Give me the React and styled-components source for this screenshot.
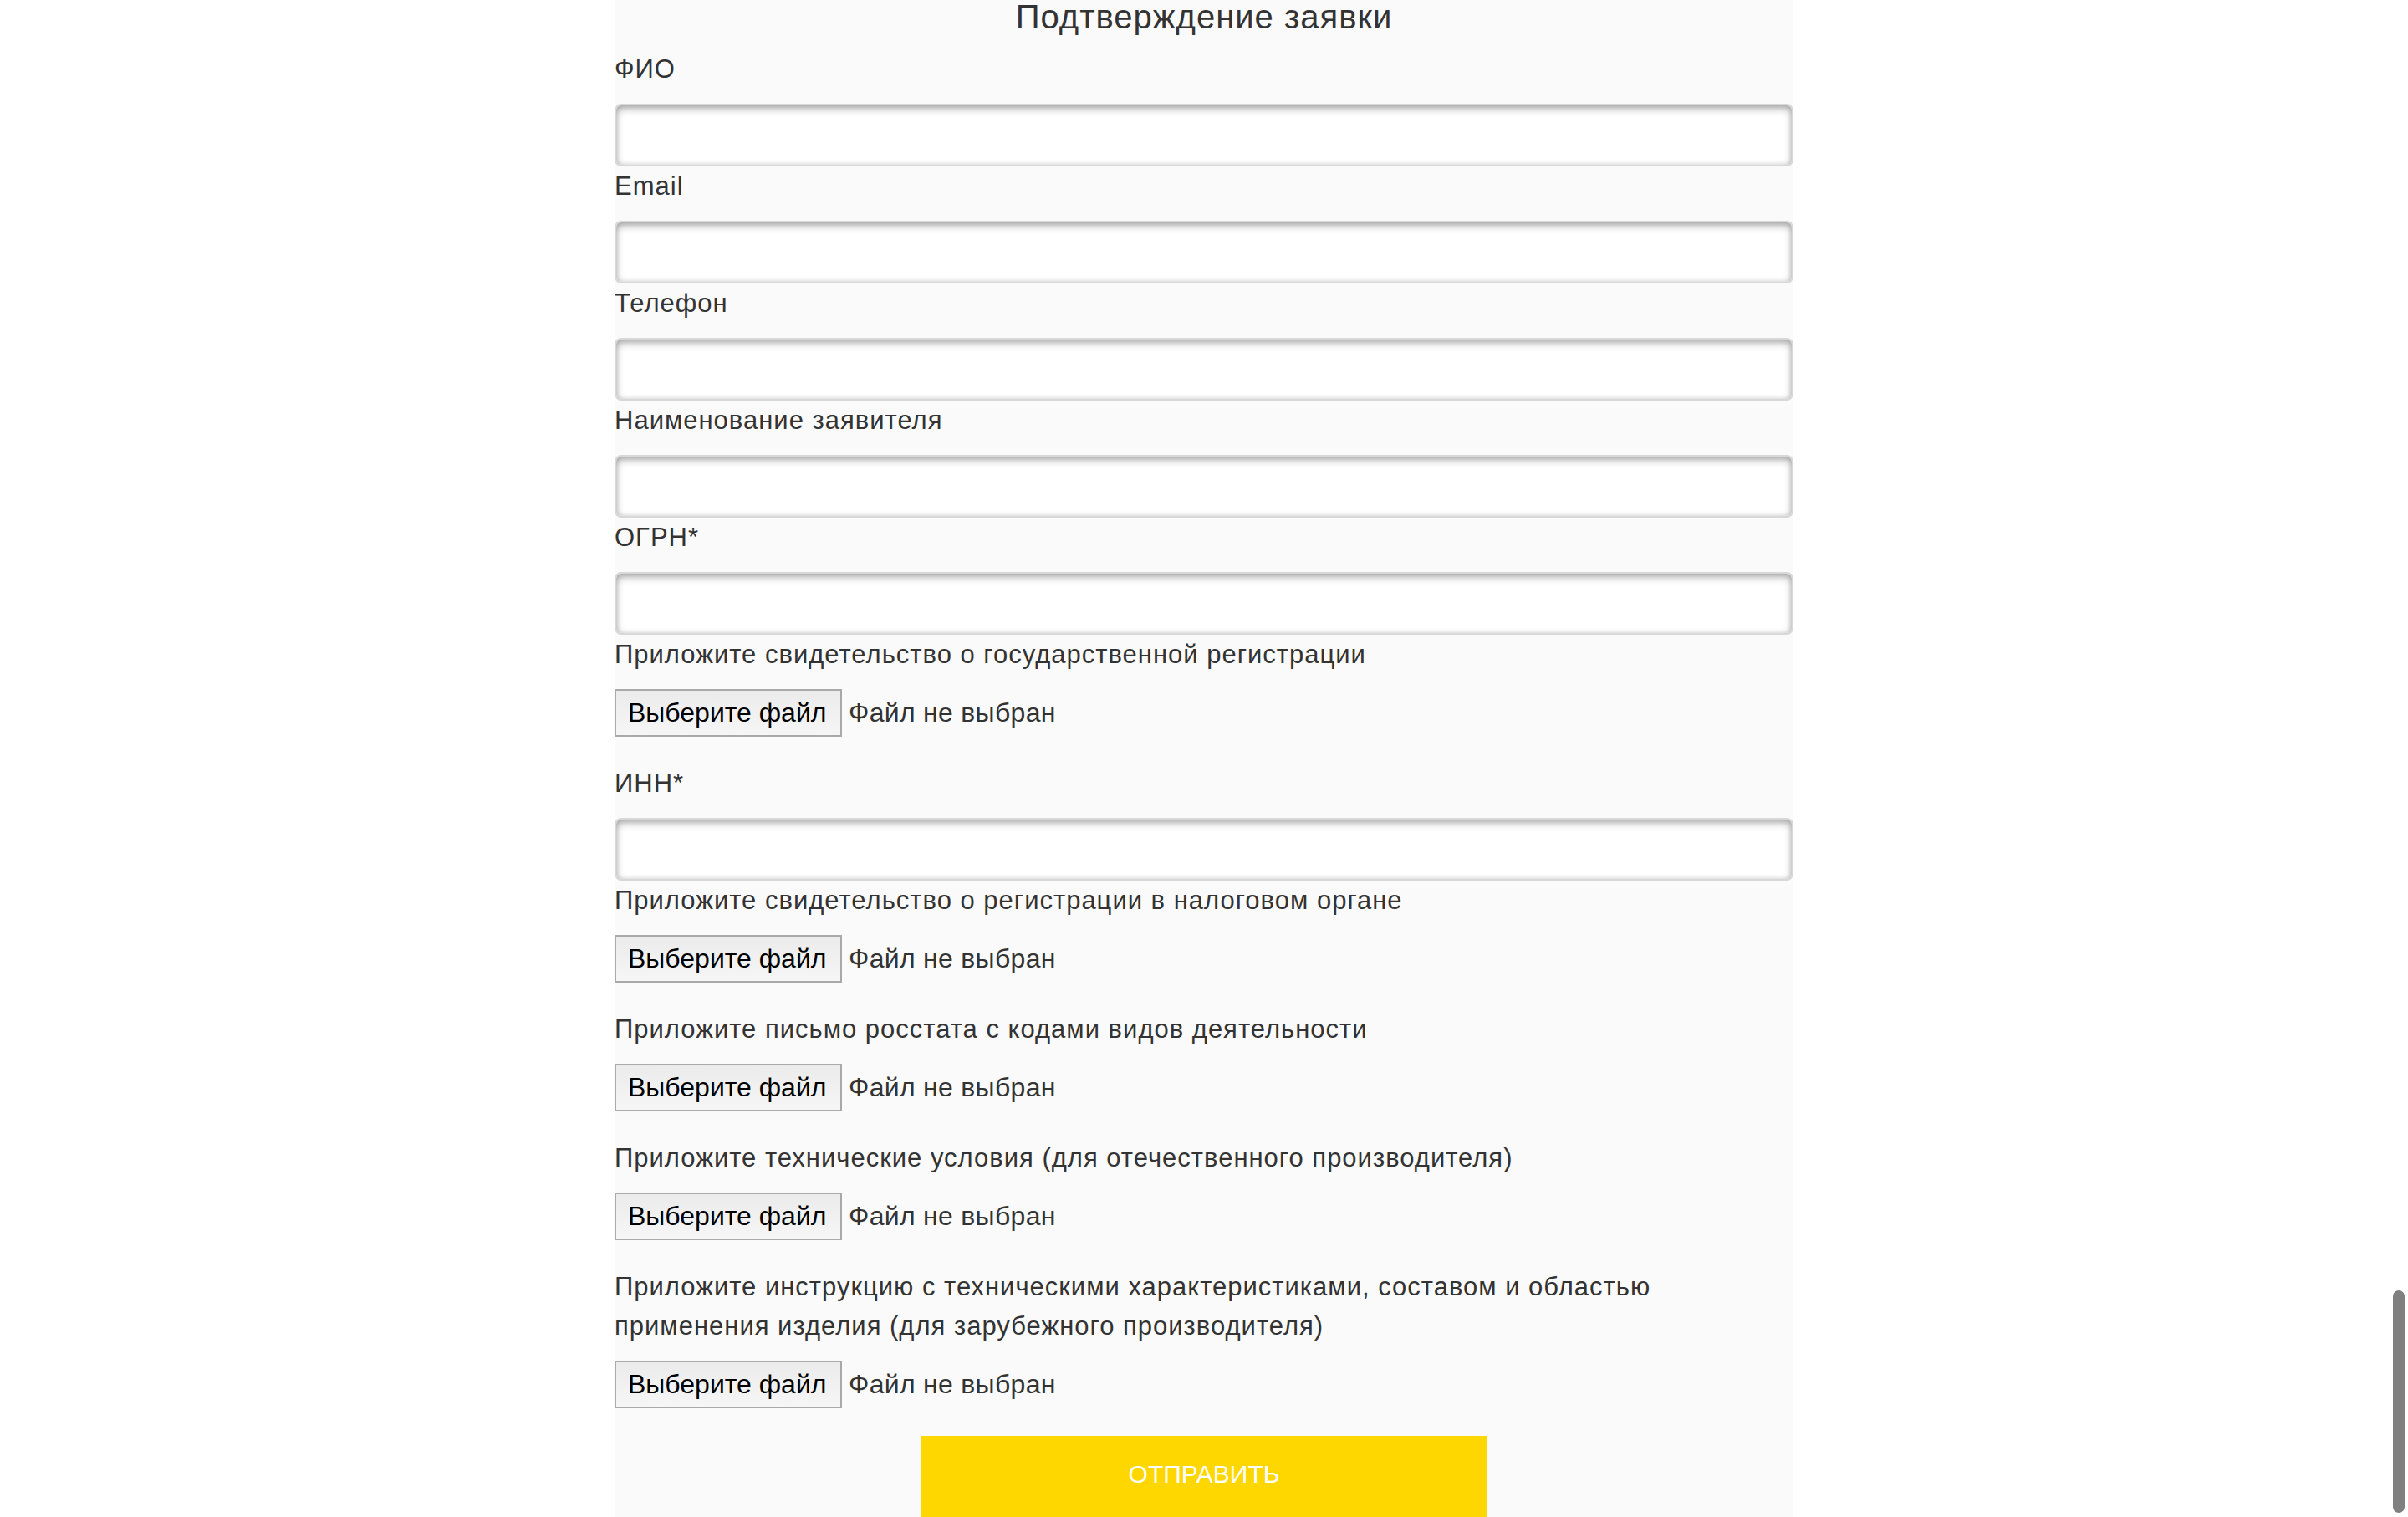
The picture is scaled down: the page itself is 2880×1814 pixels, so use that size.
import React from 'react'
import styled, { createGlobalStyle } from 'styled-components'

const GlobalStyle = createGlobalStyle`
  html, body {
    margin: 0;
    padding: 0;
    background: #ffffff;
  }
  body {
    font-family: "Liberation Sans", Arial, Helvetica, sans-serif;
    color: #333333;
  }
`

const Panel = styled.form`
  width: 1410px;
  margin: 0 auto;
  background: #fafafa;
  padding-bottom: 40px;
`

const Title = styled.h2`
  margin: 0 0 19px;
  font-size: 40px;
  line-height: 40px;
  letter-spacing: 1px;
  font-weight: normal;
  text-align: center;
  color: #333333;
`

const Label = styled.label`
  display: block;
  font-size: 31px;
  line-height: 47px;
  letter-spacing: 1px;
  margin: 0 0 18px;
  color: #333333;
`

const TextInput = styled.input`
  display: block;
  box-sizing: border-box;
  width: 100%;
  height: 75px;
  margin: 0;
  border: 2px solid #d8d8d8;
  border-radius: 8px;
  background: #ffffff;
  box-shadow: inset 0 4px 10px rgba(0, 0, 0, 0.32), inset 0 0 6px rgba(0, 0, 0, 0.12);
  outline: none;
`

const FileRow = styled.div`
  display: flex;
  align-items: center;
  gap: 8px;
  margin-bottom: 32px;
`

const FileButton = styled.span`
  box-sizing: border-box;
  display: inline-flex;
  align-items: center;
  height: 57px;
  width: 272px;
  padding: 0 14px;
  border: 2px solid #a9a9a9;
  background: linear-gradient(#ebebeb, #f6f6f6);
  color: #000000;
  font-size: 32px;
`

const FileStatus = styled.span`
  font-size: 32px;
  letter-spacing: 0.3px;
  color: #333333;
`

const Submit = styled.button`
  display: block;
  box-sizing: border-box;
  width: 678px;
  height: 112px;
  margin: 33px auto 0;
  padding: 0 0 20px;
  border: none;
  background: #ffd700;
  color: #ffffff;
  font-family: "Liberation Sans", Arial, sans-serif;
  font-size: 30px;
  text-transform: uppercase;
`

const ScrollThumb = styled.div`
  position: fixed;
  right: 4px;
  top: 1543px;
  width: 14px;
  height: 266px;
  border-radius: 7px;
  background: #808080;
`

const FileField = ({ label }) => (
  <>
    <Label>{label}</Label>
    <FileRow>
      <FileButton>Выберите файл</FileButton>
      <FileStatus>Файл не выбран</FileStatus>
    </FileRow>
  </>
)

const TextField = ({ label }) => (
  <>
    <Label>{label}</Label>
    <TextInput type="text" />
  </>
)

export default function App() {
  return (
    <>
      <GlobalStyle />
      <Panel onSubmit={e => e.preventDefault()}>
        <Title>Подтверждение заявки</Title>
        <TextField label="ФИО" />
        <TextField label="Email" />
        <TextField label="Телефон" />
        <TextField label="Наименование заявителя" />
        <TextField label="ОГРН*" />
        <FileField label="Приложите свидетельство о государственной регистрации" />
        <TextField label="ИНН*" />
        <FileField label="Приложите свидетельство о регистрации в налоговом органе" />
        <FileField label="Приложите письмо росстата с кодами видов деятельности" />
        <FileField label="Приложите технические условия (для отечественного производителя)" />
        <FileField label={<>Приложите инструкцию с техническими характеристиками, составом и областью<br />применения изделия (для зарубежного производителя)</>} />
        <Submit type="submit">Отправить</Submit>
      </Panel>
      <ScrollThumb />
    </>
  )
}
